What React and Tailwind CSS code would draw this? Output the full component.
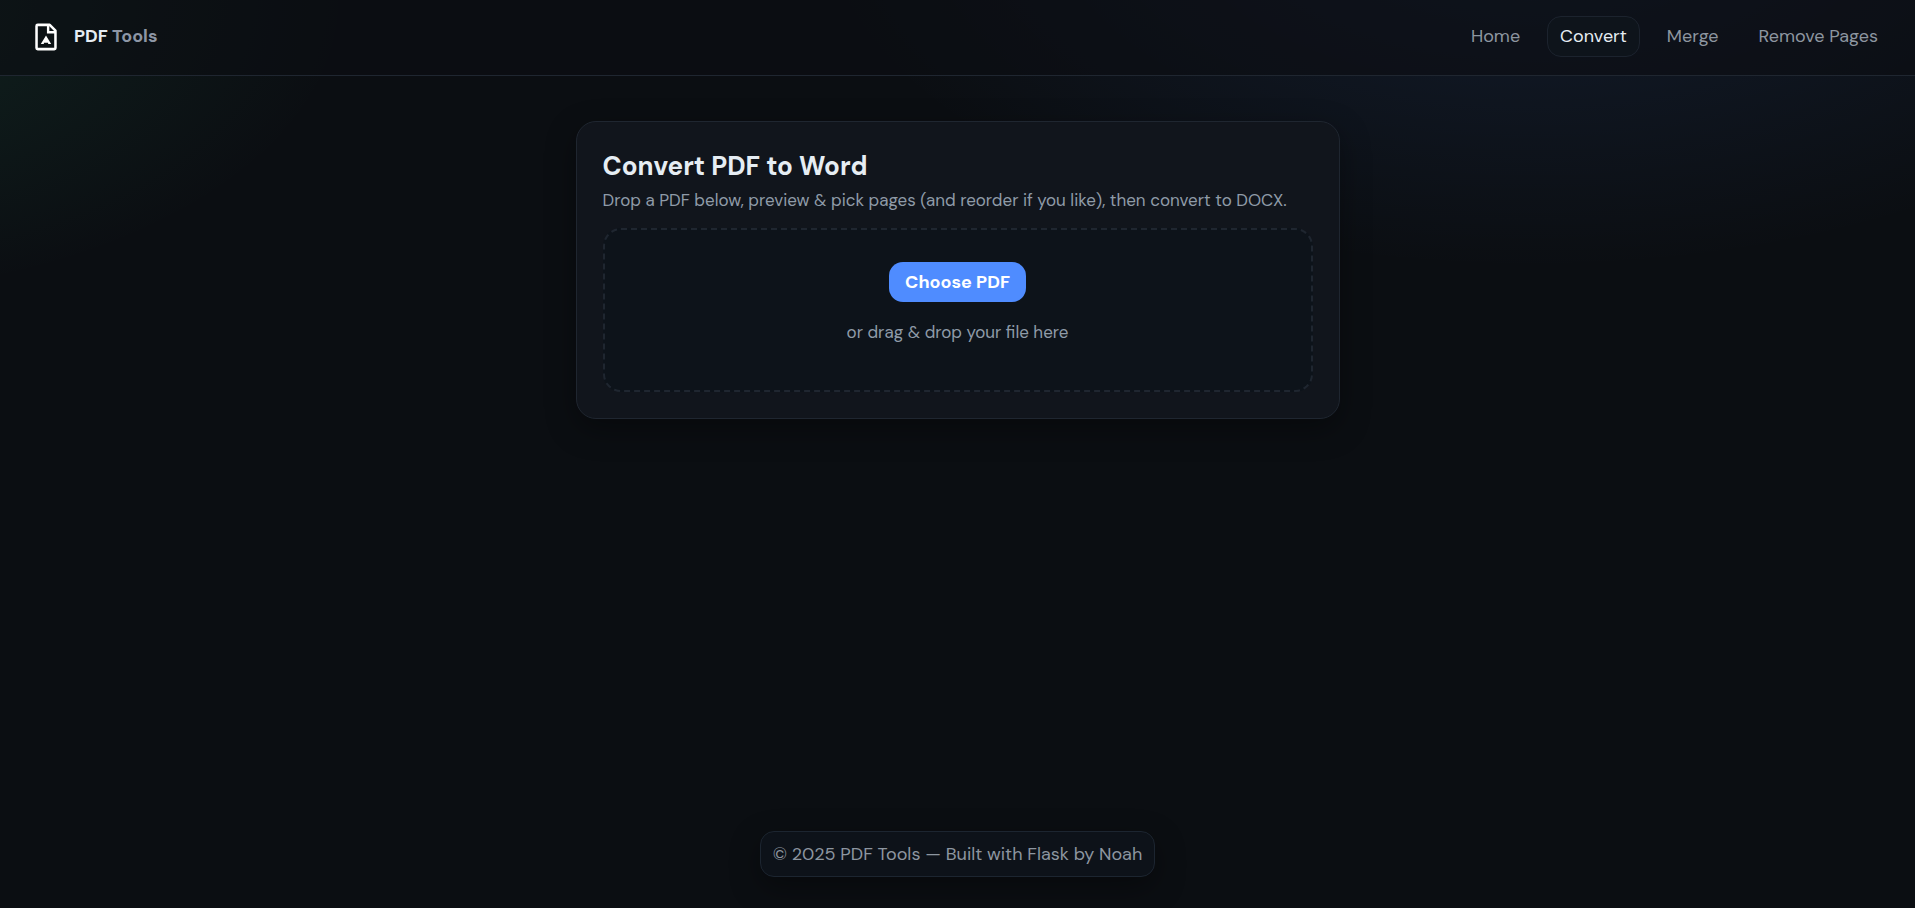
import React, { useRef } from 'react';
import clsx from 'clsx';

const links = [
    { label: 'Home', href: '#home' },
    { label: 'Convert', href: '#convert' },
    { label: 'Merge', href: '#merge' },
    { label: 'Remove Pages', href: '#remove-pages' },
];

function LogoIcon() {
    return (
        <svg className="size-8 text-white" viewBox="0 0 24 24" fill="none" stroke="currentColor" strokeWidth="1.9" strokeLinejoin="round" aria-hidden="true">
            <path d="M14.8 2.9H5.8a.9.9 0 0 0-.9.9v16.4a.9.9 0 0 0 .9.9h12.4a.9.9 0 0 0 .9-.9V7.2z" />
            <path d="M13.6 3v5.4H19" strokeWidth="1.8" strokeLinejoin="miter" />
            <path d="M12 10.8l3.9 6.5h-2.3v-.9h-3.2v.9H8.1z" fill="currentColor" stroke="none" />
        </svg>
    );
}

function Header() {
    return (
        <header className="flex items-center justify-between border-b border-[#1f2630] bg-[#0b0e13]/60 px-6 pt-4 pb-[18px] text-[18px] leading-[23px]">
            <a href="#home" className="flex items-center gap-3 pl-1.5 font-bold text-[#e6edf3]">
                <LogoIcon />
                <span>PDF <span className="text-[#8d96a5]">Tools</span></span>
            </a>
            <nav className="flex items-center gap-3.5">
                {links.map(({ label, href }) => {
                    const active = label === 'Convert';
                    return (
                        <a
                            key={label}
                            href={href}
                            aria-current={active ? 'page' : undefined}
                            className={clsx(
                                'rounded-[14px] border px-3 py-2',
                                active ? 'border-[#1c232e] bg-[#0e141b] text-[#e6edf3]' : 'border-transparent text-[#8d96a0]'
                            )}
                        >
                            {label}
                        </a>
                    );
                })}
            </nav>
        </header>
    );
}

export default function App() {
    const fileInput = useRef(null);

    return (
        <div className="flex min-h-screen flex-col bg-[#0b0e12] bg-[radial-gradient(1200px_600px_at_80%_-10%,rgba(79,140,255,0.12),transparent_60%),radial-gradient(900px_500px_at_-10%_0%,rgba(61,220,151,0.11),transparent_60%)] font-['DM_Sans',Inter,sans-serif] text-[17px] leading-6 text-[#e6edf3]">
            <Header />

            <main className="flex flex-1 flex-col items-center px-6 pt-[45px] pb-12">
                <section className="w-full max-w-[764px] rounded-[20px] border border-[#1f2630] bg-[#11151c] p-[26px] shadow-[0_10px_30px_rgba(0,0,0,0.35)]">
                    <h1 className="text-[26px] leading-9 font-bold">Convert PDF to Word</h1>
                    <p className="mt-1 text-[#8f9ba8]">
                        Drop a PDF below, preview &amp; pick pages (and reorder if you like), then convert to DOCX.
                    </p>

                    {/* Drop zone */}
                    <div className="mt-4 flex flex-col items-center rounded-[18px] border-2 border-dashed border-[#1f2630] bg-[#0d131a] px-6 pt-8 pb-[46px]">
                        <input ref={fileInput} id="pdf-file" type="file" accept="application/pdf" aria-label="PDF file" className="hidden" />
                        <button
                            type="button"
                            onClick={() => fileInput.current?.click()}
                            className="rounded-[14px] bg-[#4f8cff] px-4 py-2 text-[18px] leading-6 font-bold text-white"
                        >
                            Choose PDF
                        </button>
                        <p className="mt-[18px] text-[#8f9ba8]">or drag &amp; drop your file here</p>
                    </div>
                </section>
            </main>

            <footer className="flex justify-center px-6 pb-[31px]">
                <div className="rounded-[14px] border border-[#1c2530] bg-[#0d1219] px-3 py-2.5 text-[18px] leading-6 text-[#8d96a0] shadow-[0_10px_30px_rgba(0,0,0,0.35)]">
                    © 2025 PDF Tools — Built with Flask by Noah
                </div>
            </footer>
        </div>
    );
}
